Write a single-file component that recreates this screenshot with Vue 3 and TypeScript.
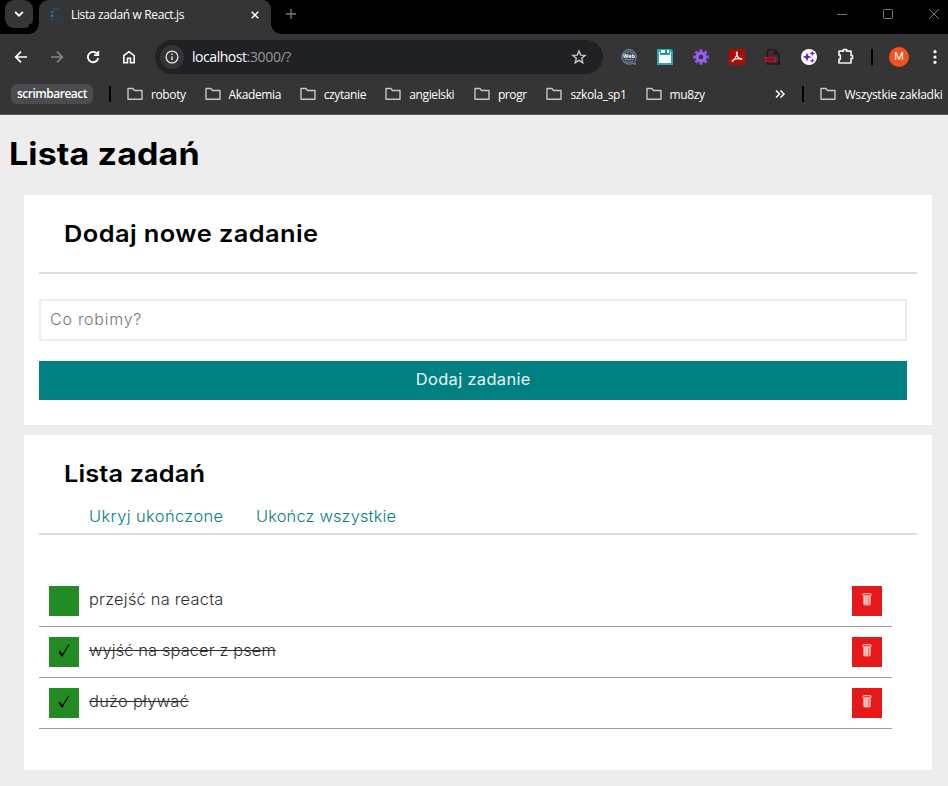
<script setup lang="ts">
import { ref } from 'vue'

interface Bookmark {
  name: string
  width: number
}

interface Task {
  id: number
  content: string
  done: boolean
  spacing: number
}

const bookmarks: Bookmark[] = [
  { name: 'roboty', width: 35 },
  { name: 'Akademia', width: 52.5 },
  { name: 'czytanie', width: 43 },
  { name: 'angielski', width: 46 },
  { name: 'progr', width: 30 },
  { name: 'szkola_sp1', width: 56.5 },
  { name: 'mu8zy', width: 35 },
]

const newTask = ref('')
const tasks = ref<Task[]>([
  { id: 1, content: 'przejść na reacta', done: false, spacing: 0.2 },
  { id: 2, content: 'wyjść na spacer z psem', done: true, spacing: 0.1 },
  { id: 3, content: 'dużo pływać', done: true, spacing: 0.25 },
])

let nextId = 4

function addTask() {
  const content = newTask.value.trim()
  if (!content) return
  tasks.value.push({ id: nextId++, content, done: false, spacing: 0.2 })
  newTask.value = ''
}

function removeTask(id: number) {
  tasks.value = tasks.value.filter((task) => task.id !== id)
}

function completeAll() {
  tasks.value.forEach((task) => (task.done = true))
}
</script>

<template>
  <div class="window">
    <header class="browser">
      <div class="tabstrip">
        <button class="tab-search" aria-label="Karty">
          <svg width="10" height="6" viewBox="0 0 10 6"><path d="M1.2 1 5 4.7 8.800 1" fill="none" stroke="#fff" stroke-width="1.8" /></svg>
        </button>
        <div class="tab">
          <svg class="favicon" width="16" height="16" viewBox="0 0 16 16">
            <rect x="1.600" y="2" width="12.500" height="13.500" rx="1" fill="none" stroke="#2b3f52" />
            <path d="M5 2.500V1h2V0h2v1h2v1.500z" fill="#344a5e" />
            <circle cx="4.300" cy="5" r="1.300" fill="#2271b8" /><circle cx="4.300" cy="8.800" r="1.600" fill="#2271b8" /><circle cx="4.300" cy="12.400" r=".8" fill="#285a8a" />
            <path d="M7.500 5h4M7.500 9h4M7.500 12.500h4" stroke="#303a44" />
          </svg>
          <span class="tab-title">Lista zadań w React.js</span>
          <svg class="tab-close" width="8" height="8" viewBox="0 0 8 8"><path d="M.7.7l6.600 6.600M7.300.7L.7 7.300" stroke="#fff" stroke-width="1.500" /></svg>
        </div>
        <svg class="new-tab" width="10" height="10" viewBox="0 0 10 10"><path d="M5 0v10M0 5h10" stroke="#7c7c7c" stroke-width="1.300" /></svg>
        <div class="controls">
          <svg width="10" height="10" viewBox="0 0 10 10"><path d="M0 5.500h10" stroke="#787878" /></svg>
          <svg width="10" height="10" viewBox="0 0 10 10"><rect x=".5" y=".5" width="9" height="9" rx="1" fill="none" stroke="#787878" /></svg>
          <svg width="10" height="10" viewBox="0 0 10 10"><path d="M0 0l10 10M10 0L0 10" stroke="#787878" /></svg>
        </div>
      </div>

      <div class="toolbar">
        <nav class="nav">
          <svg width="16" height="16" viewBox="0 0 16 16" fill="none" stroke="#fff" stroke-width="1.700"><path d="M14 8H3M8 2.700 2.700 8 8 13.300" /></svg>
          <svg width="16" height="16" viewBox="0 0 16 16" fill="none" stroke="#858585" stroke-width="1.700"><path d="M2 8h11M8 2.700 13.300 8 8 13.300" /></svg>
          <svg width="16" height="16" viewBox="0 0 16 16" fill="none" stroke="#fff" stroke-width="1.800"><path d="M12.200 4.800A5.200 5.200 0 1 0 13.200 9M13.300 2v4.200H9" /></svg>
          <svg width="16" height="16" viewBox="0 0 16 16" fill="none" stroke="#fff" stroke-width="1.600"><path d="M2.800 6.600 8 2.700l5.200 3.900v7.100h-3.700V9.300h-3v4.400H2.800z" /></svg>
        </nav>
        <div class="address">
          <span class="info">
            <svg width="14" height="14" viewBox="0 0 14 14"><circle cx="7" cy="7" r="5.900" fill="none" stroke="#e4e4e4" stroke-width="1.300" /><path d="M7 6.300v4M7 3.600v1.500" stroke="#e4e4e4" stroke-width="1.400" /></svg>
          </span>
          <span class="url"><span class="host">localhost</span><span class="path">:3000/?</span></span>
          <svg class="star" width="16" height="16" viewBox="0 0 16 16"><path d="M8 1.900l1.700 4.200 4.500.3-3.500 2.900 1.100 4.400L8 11.300l-3.800 2.400 1.100-4.400-3.500-2.900 4.500-.3z" fill="none" stroke="#c7c7c7" stroke-width="1.400" /></svg>
        </div>
        <div class="extensions">
          <svg width="16" height="16" viewBox="0 0 16 16">
            <path d="M8 .5a7.400 7.400 0 1 0 3.500 14l3 1-.8-3A7.400 7.400 0 0 0 8 .5z" fill="#3c4757" stroke="#7f8b98" />
            <path d="M3 4.500Q8 1 13 4.500M4 12.500q4 2 8 0" fill="none" stroke="#75879b" />
            <text x="8" y="8.900" class="web-label">Web</text><path d="M4 10.500h8" stroke="#aeb9c5" stroke-dasharray="1 .7" />
          </svg>
          <svg width="16" height="16" viewBox="0 0 16 16"><path d="M0 0h14l2 2v14H0z" fill="#2ca9ad" /><path d="M4 1h8v4H4z" fill="#168e93" /><path d="M4 1h4v3H4zM10 1h2v3h-2zM2 6h12v8H2z" fill="#fff" /><path d="M2 3h1v4H2zM13 3h1v4h-1z" fill="#fff" /></svg>
          <svg width="16" height="16" viewBox="0 0 16 16">
            <g stroke="#8b56f0" stroke-width="3"><path d="M8 .2v15.600M.2 8h15.600" /><path d="M2.500 2.500l11 11M13.500 2.500l-11 11" /></g>
            <circle cx="8" cy="8" r="5.500" fill="#9660f3" /><circle cx="8" cy="8" r="2.300" fill="#373538" />
          </svg>
          <svg width="16" height="16" viewBox="0 0 16 16"><rect width="16" height="16" rx="2.500" fill="#b30b00" /><path d="M7.800 3c1.300 0 .1 4.800-4 9-1.500.8-1.200-2 8-2.600 2.300.5.6 2.100-1.500.1C7.800 7.600 6.600 3 7.800 3z" fill="none" stroke="#fff" stroke-width="1.100" /></svg>
          <svg width="16" height="16" viewBox="0 0 16 16"><path d="M2.500 8V1H10l4 4v10H2.500v-2" fill="none" stroke="#211b1b" stroke-width="1.700" /><path d="M9 1v5h5" fill="#211b1b" /><circle cx="7.500" cy="5" r="1.500" fill="none" stroke="#4f1623" /><rect x="0" y="8" width="11" height="5" fill="#c20b2b" /><text x="5.500" y="12" class="pdf-label">PDF</text></svg>
          <svg width="16" height="16" viewBox="0 0 16 16"><circle cx="8" cy="8" r="8" fill="#fff" /><path d="M6 3.500 7.200 6.800 10.500 8 7.200 9.200 6 12.500 4.800 9.200 1.500 8 4.800 6.800zM11.300 1.800l.8 1.800 1.800.8-1.800.8-.8 1.800-.8-1.800-1.800-.8 1.800-.8zM11.300 9.300l.7 1.700 1.700.7-1.700.7-.7 1.700-.7-1.700-1.700-.7 1.700-.7z" fill="#7412d6" /></svg>
          <svg width="18" height="18" viewBox="0 0 18 18"><path d="M2 3.200h4.300V1.700h3.400v1.500H14v4.300h1.500v3H14V15H2v-3.700h1.300V7.100H2z" fill="none" stroke="#eee" stroke-width="1.700" stroke-linejoin="round" /></svg>
        </div>
        <span class="separator toolbar-separator"></span>
        <span class="avatar">M</span>
        <svg class="menu" width="4" height="16" viewBox="0 0 4 16"><g fill="#fff"><circle cx="2" cy="2.700" r="1.600" /><circle cx="2" cy="8" r="1.600" /><circle cx="2" cy="13.300" r="1.600" /></g></svg>
      </div>

      <div class="bookmarks">
        <span class="group">scrimbareact</span>
        <span class="separator first-separator"></span>
        <span v-for="item in bookmarks" :key="item.name" class="bookmark">
          <svg width="16" height="14" viewBox="0 0 16 14"><path d="M1 1.500h4.900l1.600 2H15v8.700H1z" fill="none" stroke="#c7c7c7" stroke-width="1.400" stroke-linejoin="round" /></svg>
          <span class="label" :style="{ width: item.width + 'px' }">{{ item.name }}</span>
        </span>
        <svg class="more" width="10" height="8" viewBox="0 0 10 8"><path d="M1 .5 4.500 4 1 7.500M5.500.5 9 4 5.500 7.500" fill="none" stroke="#fff" stroke-width="1.500" /></svg>
        <span class="separator last-separator"></span>
        <span class="bookmark all">
          <svg width="16" height="14" viewBox="0 0 16 14"><path d="M1 1.500h4.900l1.600 2H15v8.700H1z" fill="none" stroke="#c7c7c7" stroke-width="1.400" stroke-linejoin="round" /></svg>
          <span class="label">Wszystkie zakładki</span>
        </span>
      </div>
    </header>

    <main class="page">
      <h1><span class="wide">Lista zadań</span></h1>

      <section class="card add-card">
        <h2 class="title-new"><span class="wide">Dodaj nowe zadanie</span></h2>
        <form class="form" @submit.prevent="addTask">
          <input v-model="newTask" class="input" placeholder="Co robimy?">
          <button class="submit"><span class="submit-label">Dodaj zadanie</span></button>
        </form>
      </section>

      <section class="card list-card">
        <div class="list-head">
          <h2 class="title-list"><span class="wide">Lista zadań</span></h2>
          <div class="actions">
            <button class="link hide">Ukryj ukończone</button>
            <button class="link" @click="completeAll">Ukończ wszystkie</button>
          </div>
        </div>
        <ul class="tasks">
          <li v-for="task in tasks" :key="task.id" class="task">
            <button class="toggle" @click="task.done = !task.done">
              <svg v-if="task.done" width="12" height="13" viewBox="0 0 12 13"><path d="M.4 7.800 2.300 6.700 4.100 10.200 10.500.7 11.600.4 4.500 12.500 3.500 12.500z" fill="#000" /></svg>
            </button>
            <span class="content"><span class="task-text" :class="{ done: task.done }" :style="{ letterSpacing: task.spacing + 'px' }">{{ task.content }}</span></span>
            <button class="remove" aria-label="Usuń" @click="removeTask(task.id)">
              <svg width="10" height="13" viewBox="0 0 10 13">
                <path d="M1.200 2.500h7.600v8.700q-.2 1-1.800 1.300H3q-1.600-.3-1.800-1.300z" fill="#f5a5a5" />
                <path d="M2.500 3.500v8M5 4v8" stroke="#fbd3d3" stroke-width="1" />
                <path d="M6.500 4v8" stroke="#ec7676" stroke-width="1" />
                <rect x=".8" y=".6" width="8.400" height="2.200" rx=".8" fill="#dc3939" stroke="#f9c6c6" />
              </svg>
            </button>
          </li>
        </ul>
      </section>
    </main>
  </div>
</template>

<style>
body {
  background: #ededed;
}
</style>

<style scoped>
.window {
  width: 948px;
  height: 786px;
  overflow: hidden;
  background: #ededed;
  box-sizing: border-box;
}
.window *, .window *::before, .window *::after {
  box-sizing: border-box;
}
svg {
  display: block;
  flex: none;
}
button {
  border: 0;
  padding: 0;
  background: none;
}
.browser {
  height: 115px;
  background: #353535;
  border-bottom: 1px solid #5b5b5b;
  font-family: "Open Sans", "Noto Sans", sans-serif;
  font-size: 12px;
  color: #fff;
  white-space: nowrap;
}
.tabstrip {
  display: flex;
  height: 34px;
  background: #000;
}
.tab-search {
  display: flex;
  align-items: center;
  justify-content: center;
  width: 28px;
  height: 28px;
  margin-left: 5px;
  border-radius: 9px;
  background: #353535;
}
.tab {
  position: relative;
  display: flex;
  align-items: center;
  width: 232px;
  height: 34px;
  margin-left: 6px;
  padding: 0 12px 5px 9px;
  border-radius: 9px 9px 0 0;
  background: #353535;
}
.tab::before, .tab::after {
  content: "";
  position: absolute;
  bottom: 0;
  width: 10px;
  height: 10px;
}
.tab::before {
  left: -10px;
  background: radial-gradient(circle at 0 0, #000 9.500px, #353535 10px);
}
.tab::after {
  right: -10px;
  background: radial-gradient(circle at 100% 0, #000 9.500px, #353535 10px);
}
.tab-title {
  margin-left: 7px;
  font-size: 12px;
  letter-spacing: -0.36px;
}
.tab-close {
  margin-left: auto;
}
.new-tab {
  margin: 9px 0 0 15px;
}
.controls {
  display: flex;
  gap: 36px;
  margin: 9px 9px 0 auto;
}
.toolbar {
  display: flex;
  align-items: center;
  height: 46px;
}
.nav {
  display: flex;
  gap: 20px;
  padding-left: 13px;
}
.address {
  display: flex;
  align-items: center;
  width: 448px;
  height: 34px;
  margin-left: 18px;
  padding: 0 16px 0 5px;
  border-radius: 17px;
  background: #202124;
}
.info {
  display: flex;
  align-items: center;
  justify-content: center;
  width: 24px;
  height: 24px;
  border-radius: 50%;
  background: #353535;
}
.url {
  margin-left: 8px;
  padding-bottom: 1px;
  font-size: 14px;
}
.host {
  letter-spacing: -0.45px;
}
.path {
  color: #979797;
  letter-spacing: -0.35px;
}
.star {
  margin-left: auto;
}
.extensions {
  display: flex;
  align-items: center;
  gap: 20px;
  margin-left: 18px;
}
.web-label {
  font: 700 5.500px "Open Sans", sans-serif;
  text-anchor: middle;
  fill: #fff;
}
.pdf-label {
  font: 700 4px "Open Sans", sans-serif;
  text-anchor: middle;
  fill: #510617;
}
.separator {
  flex: none;
  width: 2px;
  height: 16px;
  background: #000;
}
.toolbar-separator {
  margin-left: 16px;
}
.avatar {
  width: 20px;
  height: 20px;
  margin-left: 16px;
  border-radius: 50%;
  background: #f4511e;
  font: 400 11px/20px Roboto, sans-serif;
  text-align: center;
}
.menu {
  margin-left: 24px;
}
.bookmarks {
  display: flex;
  align-items: center;
  height: 28px;
  padding-left: 11px;
}
.group {
  width: 82px;
  height: 20px;
  border-radius: 6px;
  background: #4b4c4f;
  font-size: 12px;
  font-weight: 600;
  line-height: 19px;
  letter-spacing: -0.5px;
  text-align: center;
}
.first-separator {
  margin: 0 16px;
}
.bookmark {
  display: flex;
  align-items: center;
  gap: 8px;
  margin-right: 18.600px;
}
.label {
  letter-spacing: -0.38px;
}
.more {
  margin-left: 52.300px;
}
.last-separator {
  margin: 0 16px 0 17px;
}
.all {
  margin-right: 0;
}
.all .label {
  letter-spacing: -0.25px;
}
.page {
  font-family: Inter, "Open Sans", sans-serif;
  font-size: 15.500px;
}
.wide {
  display: inline-block;
  transform: scaleX(1.08);
  transform-origin: 0 50%;
}
h1 {
  height: 80px;
  margin: 0;
  padding: 19px 0 0 8.500px;
  font-size: 31.500px;
  font-weight: 680;
  line-height: 40px;
  letter-spacing: 0.1px;
}
h2 {
  margin: 0;
  padding-left: 25px;
  font-size: 23.500px;
  font-weight: 630;
  line-height: 30px;
  letter-spacing: 0.1px;
}
.card {
  width: 908px;
  margin: 0 0 10px 24px;
  padding: 0 15px;
  background: #fff;
}
.add-card {
  height: 230px;
}
.title-new {
  height: 79px;
  padding-top: 24px;
  border-bottom: 2px solid #ddd;
  letter-spacing: 0.4px;
}
.form {
  display: flex;
  flex-direction: column;
  gap: 20px;
  width: 868px;
  padding-top: 25px;
}
.input {
  height: 42px;
  padding: 0 10px 2px 9px;
  border: 2px solid #ededed;
  background: #fff;
  font: 300 16px Inter, sans-serif;
  letter-spacing: 0.75px;
  outline: 0;
}
.input::placeholder {
  color: #757575;
}
.submit {
  height: 39px;
  padding-bottom: 2px;
  background: teal;
  color: #e9f5f5;
  font: 400 15.500px Inter, sans-serif;
  letter-spacing: 0.33px;
}
.submit-label {
  display: inline-block;
  transform: scaleX(1.06);
}
.list-card {
  height: 335px;
  margin-bottom: 0;
}
.list-head {
  height: 100px;
  padding-top: 24px;
  border-bottom: 2px solid #ddd;
}
.actions {
  display: flex;
  gap: 40.500px;
  padding: 17px 0 0 50px;
}
.link {
  color: teal;
  font: 300 15.500px/22px Inter, sans-serif;
  letter-spacing: 0.15px;
  transform: scaleX(1.06);
  transform-origin: 0 50%;
}
.hide {
  letter-spacing: 0.38px;
}
.tasks {
  width: 853px;
  margin: 0;
  padding: 41px 0 0;
  list-style: none;
}
.task {
  display: flex;
  height: 51px;
  padding: 10px;
  border-bottom: 1px solid #a0a0a0;
}
.toggle, .remove {
  display: flex;
  justify-content: center;
  width: 30px;
  height: 30px;
}
.toggle {
  padding-top: 7px;
  background: #228b22;
}
.remove {
  padding-top: 7px;
  background: #e51919;
}
.content {
  flex: 1;
  padding-left: 9.500px;
  color: #2c2c2c;
  font-weight: 300;
  line-height: 27px;
}
.task-text {
  display: inline-block;
  transform: scaleX(1.06);
  transform-origin: 0 50%;
}
.done {
  text-decoration: line-through;
}
</style>
